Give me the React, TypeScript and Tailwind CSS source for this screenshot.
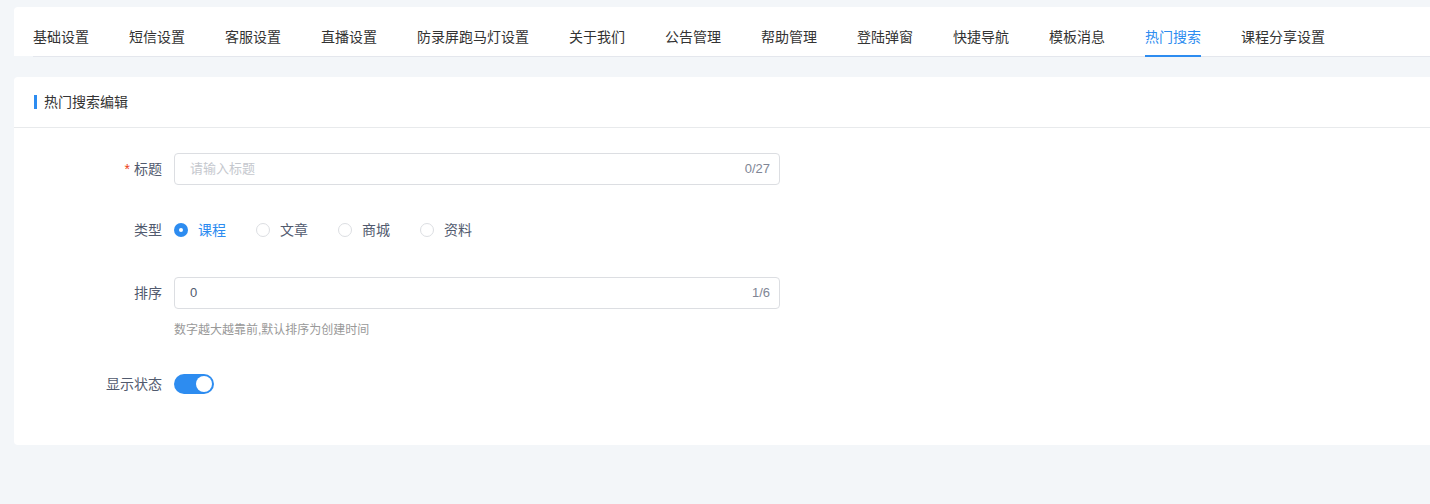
import React from "react";

const tabs = [
  "基础设置",
  "短信设置",
  "客服设置",
  "直播设置",
  "防录屏跑马灯设置",
  "关于我们",
  "公告管理",
  "帮助管理",
  "登陆弹窗",
  "快捷导航",
  "模板消息",
  "热门搜索",
  "课程分享设置",
];

const radios = ["课程", "文章", "商城", "资料"];

export default function App() {
  return (
    <div
      className="min-h-[504px] w-full overflow-hidden bg-[#f3f6f9] pl-[14px] pt-[7px]"
      style={{ fontFamily: '"Liberation Sans", "Noto Sans CJK SC", sans-serif' }}
    >
      {/* Tabs card */}
      <div className="h-[49px] rounded-tl-[4px] bg-white">
        <div className="ml-[19px] flex h-[50px] gap-[40px] border-b border-[#e4e7ed]">
          {tabs.map((t) => {
            const active = t === "热门搜索";
            return (
              <div
                key={t}
                className={
                  "-mb-px flex h-[50px] items-start whitespace-nowrap border-b-2 pt-[19px] text-[14px] leading-[22px] " +
                  (active
                    ? "border-[#2d8cf0] text-[#2d8cf0]"
                    : "border-transparent text-[#333333]")
                }
              >
                {t}
              </div>
            );
          })}
        </div>
      </div>

      {/* Form card */}
      <div className="mt-[21px] h-[368px] rounded-l-[4px] bg-white">
        <div className="flex h-[51px] items-center border-b border-[#e8eaec] pl-[20px]">
          <div className="h-[14px] w-[3px] bg-[#2d8cf0]" />
          <div className="ml-[7px] text-[14px] leading-[20px] text-[#333333]">
            热门搜索编辑
          </div>
        </div>

        <div className="pt-[25px]">
          {/* 标题 */}
          <div className="flex items-center">
            <div className="w-[160px] pr-[12px] text-right text-[14px] leading-[20px] text-[#515a6e]">
              <span className="mr-[4px] text-[#ed4014]">*</span>标题
            </div>
            <div className="flex h-[32px] w-[606px] items-center rounded-[4px] border border-[#dcdee2] pl-[15px] pr-[9px]">
              <span className="flex-1 text-[13px] text-[#c5c8ce]">请输入标题</span>
              <span className="text-[13px] text-[#808695]">0/27</span>
            </div>
          </div>

          {/* 类型 */}
          <div className="mt-[29px] flex h-[32px] items-center">
            <div className="w-[160px] pr-[12px] text-right text-[14px] leading-[20px] text-[#515a6e]">
              类型
            </div>
            <div className="flex items-center">
              {radios.map((r, i) => {
                const checked = i === 0;
                return (
                  <div key={r} className="mr-[30px] flex items-center">
                    {checked ? (
                      <div className="flex h-[14px] w-[14px] items-center justify-center rounded-full bg-[#2d8cf0]">
                        <div className="h-[4px] w-[4px] rounded-full bg-white" />
                      </div>
                    ) : (
                      <div className="h-[14px] w-[14px] rounded-full border border-[#dcdee2] bg-white" />
                    )}
                    <span
                      className={
                        "ml-[10px] text-[14px] leading-[20px] " +
                        (checked ? "text-[#2d8cf0]" : "text-[#515a6e]")
                      }
                    >
                      {r}
                    </span>
                  </div>
                );
              })}
            </div>
          </div>

          {/* 排序 */}
          <div className="mt-[31px] flex items-center">
            <div className="w-[160px] pr-[12px] text-right text-[14px] leading-[20px] text-[#515a6e]">
              排序
            </div>
            <div className="flex h-[32px] w-[606px] items-center rounded-[4px] border border-[#dcdee2] pl-[15px] pr-[9px]">
              <span className="flex-1 text-[13px] text-[#515a6e]">0</span>
              <span className="text-[13px] text-[#808695]">1/6</span>
            </div>
          </div>
          <div className="ml-[160px] mt-[12px] text-[12px] leading-[18px] text-[#999999]">
            数字越大越靠前,默认排序为创建时间
          </div>

          {/* 显示状态 */}
          <div className="mt-[35px] flex items-center">
            <div className="w-[160px] pr-[12px] text-right text-[14px] leading-[20px] text-[#515a6e]">
              显示状态
            </div>
            <div className="relative h-[20px] w-[40px] rounded-full bg-[#2d8cf0]">
              <div className="absolute right-[2px] top-[2px] h-[16px] w-[16px] rounded-full bg-white" />
            </div>
          </div>
        </div>
      </div>
    </div>
  );
}
